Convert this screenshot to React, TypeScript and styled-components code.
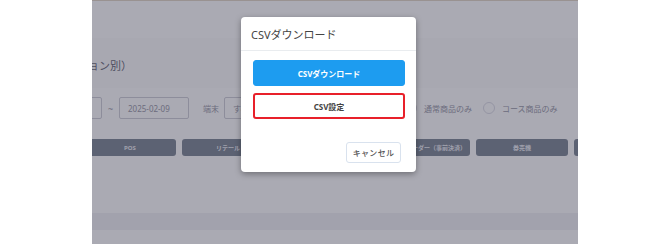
import React from 'react'
import styled, { createGlobalStyle } from 'styled-components'

const GlobalStyle = createGlobalStyle`
  html, body {
    margin: 0;
    padding: 0;
    background: #fff;
  }
  body {
    font-family: "Noto Sans", "Noto Sans CJK JP", sans-serif;
    overflow: hidden;
  }
`

const Viewport = styled.div`
  width: 670px;
  height: 244px;
  display: flex;
  justify-content: center;
  overflow: hidden;
`

const Frame = styled.div`
  position: relative;
  width: 486px;
  height: 244px;
  overflow: hidden;
  background: #fff;
`

// page content is wider than the visible frame, shifted so coords match the page
const Page = styled.div`
  margin-left: -92px;
  width: 720px;
  display: flex;
  flex-direction: column;
`

const TopBar = styled.div`
  height: 37px;
  border-top: 1px solid #e6dccd;
  background: #fff;
`

const TitleBand = styled.div`
  height: 50px;
  display: flex;
  align-items: center;
  padding-top: 4px;
  box-sizing: border-box;
  background: #fcfcfd;
`

const PageTitle = styled.h1`
  margin: 0;
  font-size: 11px;
  font-weight: 400;
  color: #777784;
  white-space: nowrap;
`

const FilterRow = styled.div`
  display: flex;
  align-items: center;
  gap: 5px;
  padding: 9px 0 0 32px;
  height: 22px;
`

const Field = styled.div<{ $w: number }>`
  width: ${p => p.$w}px;
  height: 22px;
  box-sizing: border-box;
  border: 1px solid #d4d4dc;
  border-radius: 2px;
  display: flex;
  align-items: center;
  padding-left: 8px;
  font-size: 8px;
  color: #a4a4b0;
  flex-shrink: 0;
`

const Tilde = styled.span`
  width: 7px;
  font-size: 9px;
  color: #a4a4b0;
  text-align: center;
`

const FieldLabel = styled.span`
  margin-left: 9px;
  font-size: 8px;
  color: #a4a4b0;
  white-space: nowrap;
`

const RadioGroup = styled.div`
  display: flex;
  align-items: center;
  gap: 11px;
  margin-left: 4px;
`

const RadioOption = styled.label`
  display: flex;
  align-items: center;
  gap: 7px;
  font-size: 8px;
  color: #a4a4b0;
  white-space: nowrap;
`

const RadioCircle = styled.span`
  width: 12px;
  height: 12px;
  box-sizing: border-box;
  border-radius: 50%;
  border: 1px solid #e0e0e8;
  background: #fff;
`

const TabRow = styled.div`
  display: flex;
  gap: 6px;
  padding: 20px 0 0 84px;
`

const TabButton = styled.div`
  width: 92px;
  height: 17px;
  flex-shrink: 0;
  border-radius: 3px;
  background: #8b939f;
  color: #eef0f6;
  font-size: 6px;
  font-weight: 700;
  display: flex;
  align-items: center;
  justify-content: center;
  white-space: nowrap;
`

const Spacer = styled.div`
  height: 57px;
`

const TableHead = styled.div`
  height: 17px;
  background: #f4f4f7;
`

const Overlay = styled.div`
  position: absolute;
  inset: 0;
  background: rgba(0, 0, 27, 0.333);
  z-index: 1;
`

const Modal = styled.div`
  position: absolute;
  left: 149px;
  top: 17px;
  width: 175px;
  z-index: 2;
  background: #fff;
  border-radius: 4px;
  box-shadow: 0 2px 6px rgba(0, 0, 0, 0.35);
  display: flex;
  flex-direction: column;
`

const ModalHeader = styled.div`
  height: 34px;
  box-sizing: border-box;
  border-bottom: 1px solid #e9ecef;
  display: flex;
  align-items: center;
  padding-left: 10px;
  font-size: 11px;
  color: #444;
`

const ModalBody = styled.div`
  display: flex;
  flex-direction: column;
  gap: 7px;
  padding: 9px 11px 0 12px;
`

const ModalButton = styled.button<{ $variant: 'primary' | 'outline' }>`
  height: 26px;
  width: 152px;
  padding: 0;
  box-sizing: border-box;
  border-radius: 3px;
  font-family: inherit;
  font-size: 8px;
  font-weight: 700;
  cursor: pointer;
  border: ${p => (p.$variant === 'primary' ? '1px solid #1d9cf0' : '2px solid #e8202a')};
  background: ${p => (p.$variant === 'primary' ? '#1d9cf0' : '#fff')};
  color: ${p => (p.$variant === 'primary' ? '#fff' : '#444')};
`

const ModalFooter = styled.div`
  display: flex;
  justify-content: flex-end;
  padding: 23px 15px 9px 0;
`

const CancelButton = styled.button`
  width: 55px;
  height: 21px;
  padding: 0;
  box-sizing: border-box;
  border: 1px solid #d9e2ee;
  border-radius: 3px;
  background: #fff;
  font-family: inherit;
  font-size: 8px;
  font-weight: 500;
  letter-spacing: 0.3px;
  white-space: nowrap;
  color: #555;
  cursor: pointer;
`

const tabs = ['POS', 'リテール', 'セルフオーダー', 'モバイルオーダー（事前決済）', '券売機', 'その他']

export default function App() {
  return (
    <>
      <GlobalStyle />
      <Viewport>
        <Frame>
          <Page>
            <TopBar />
            <TitleBand>
              <PageTitle>売上分析（オプション別）</PageTitle>
            </TitleBand>
            <FilterRow>
              <Field $w={70}>2025-02-09</Field>
              <Tilde>~</Tilde>
              <Field $w={70}>2025-02-09</Field>
              <FieldLabel>端末</FieldLabel>
              <Field $w={172}>すべて</Field>
              <RadioGroup>
                <RadioOption>
                  <RadioCircle />
                  通常商品のみ
                </RadioOption>
                <RadioOption>
                  <RadioCircle />
                  コース商品のみ
                </RadioOption>
              </RadioGroup>
            </FilterRow>
            <TabRow>
              {tabs.map(t => (
                <TabButton key={t}>{t}</TabButton>
              ))}
            </TabRow>
            <Spacer />
            <TableHead />
          </Page>
          <Overlay />
          <Modal>
            <ModalHeader>CSVダウンロード</ModalHeader>
            <ModalBody>
              <ModalButton $variant="primary">CSVダウンロード</ModalButton>
              <ModalButton $variant="outline">CSV設定</ModalButton>
            </ModalBody>
            <ModalFooter>
              <CancelButton>キャンセル</CancelButton>
            </ModalFooter>
          </Modal>
        </Frame>
      </Viewport>
    </>
  )
}
